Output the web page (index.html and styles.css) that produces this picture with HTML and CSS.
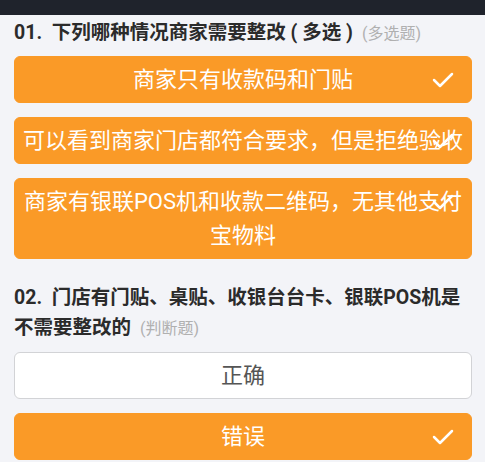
FILE: index.html
```html
<!DOCTYPE html>
<html lang="zh-CN">

<head>
    <meta charset="UTF-8">
    <title>商家整改答题</title>
    <link rel="stylesheet" href="styles.css">
</head>

<body>

    <div class="topbar"></div>

    <div class="question">
        <div class="q-title">01.&nbsp; 下列哪种情况商家需要整改 ( 多选 )<span class="q-type">(多选题)</span></div>
        <div class="options">
            <div class="option selected">商家只有收款码和门贴
                <svg class="check" width="22" height="16" viewBox="0 0 22 16"><polyline points="2,8 8,14 20,2" /></svg>
            </div>
            <div class="option selected">可以看到商家门店都符合要求，但是拒绝验收
                <svg class="check" width="22" height="16" viewBox="0 0 22 16"><polyline points="2,8 8,14 20,2" /></svg>
            </div>
            <div class="option selected">商家有银联POS机和收款二维码，无其他支付宝物料
                <svg class="check" width="22" height="16" viewBox="0 0 22 16"><polyline points="2,8 8,14 20,2" /></svg>
            </div>
        </div>
    </div>

    <div class="question second">
        <div class="q-title">02.&nbsp; 门店有门贴、桌贴、收银台台卡、银联POS机是不需要整改的<span class="q-type">(判断题)</span></div>
        <div class="options">
            <div class="option">正确</div>
            <div class="option selected">错误
                <svg class="check" width="22" height="16" viewBox="0 0 22 16"><polyline points="2,8 8,14 20,2" /></svg>
            </div>
        </div>
    </div>

</body>

</html>
```

FILE: styles.css
```css
body {
    margin: 0;
    font-family: Roboto, "Noto Sans CJK SC", sans-serif;
    background-color: #f3f4f8;
    overflow: hidden;
}

.topbar {
    height: 15px;
    background-color: #1f232c;
}

.question {
    padding: 3px 13px 0 14px;
}

.question.second {
    padding-top: 24px;
}

.q-title {
    font-size: 19.5px;
    line-height: 30px;
    font-weight: bold;
    color: #2b2b2b;
}

.q-type {
    margin-left: 9px;
    font-size: 16px;
    font-weight: normal;
    color: #b0b0b0;
}

.options {
    display: flex;
    flex-direction: column;
    gap: 14px;
    margin-top: 7px;
}

.second .options {
    margin-top: 8px;
}

.option {
    position: relative;
    padding: 5.5px 6px;
    font-size: 22px;
    line-height: 34px;
    text-align: center;
    color: #555;
    background-color: #fff;
    border: 1px solid #d2d3d6;
    border-radius: 6px;
}

.option.selected {
    color: #fff;
    background-color: #fa9a27;
    border-color: #fa9a27;
}

.check {
    position: absolute;
    right: 17px;
    top: 15px;
    fill: none;
    stroke: #fff;
    stroke-width: 2.5;
    stroke-linecap: round;
    stroke-linejoin: round;
}
```
